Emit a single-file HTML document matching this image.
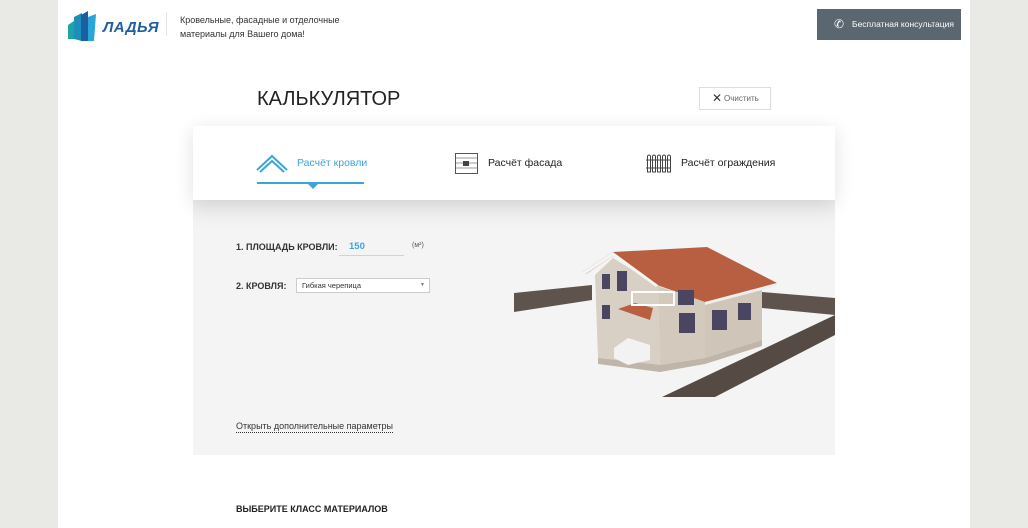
<!DOCTYPE html>
<html><head><meta charset="utf-8"><style>
*{margin:0;padding:0;box-sizing:border-box}
body{width:1028px;height:528px;background:#e9e9e5;font-family:"Liberation Sans",sans-serif;position:relative;overflow:hidden}
.main{position:absolute;left:58px;top:0;width:912px;height:528px;background:#fff}
.abs{position:absolute}
</style></head><body>
<div class="main"></div>
<svg class="abs" style="left:66px;top:9px" width="36" height="32" viewBox="0 0 36 32">
<path d="M2 16 L8 12 L8 30 L2 30Z" fill="#1aa5a6"/>
<path d="M8 8 L16 4 L16 32 L8 30Z" fill="#1b8fb8"/>
<path d="M15 6 L22 2 L22 32 L15 32Z" fill="#1d5ea3"/>
<path d="M22 8 L30 5 L28 32 L22 32Z" fill="#29a6d9"/>
</svg>
<div class="abs" style="left:103px;top:19px;font:italic bold 15px 'Liberation Sans',sans-serif;color:#1d5ea3;letter-spacing:0.5px">ЛАДЬЯ</div>
<div class="abs" style="left:166px;top:12px;width:1px;height:24px;background:#e5e5e5"></div>
<div class="abs" style="left:180px;top:13px;font-size:9px;line-height:14px;color:#333">Кровельные, фасадные и отделочные<br>материалы для Вашего дома!</div>
<div class="abs" style="left:817px;top:9px;width:144px;height:31px;background:#5a6770;color:#fff;font-size:8.5px;line-height:31px;padding-left:35px;white-space:nowrap">Бесплатная консультация</div>
<div class="abs" style="left:834px;top:17px;color:#fff;font-size:12px">✆</div>
<div class="abs" style="left:257px;top:88px;font-size:20px;color:#222">КАЛЬКУЛЯТОР</div>
<div class="abs" style="left:699px;top:87px;width:72px;height:23px;border:1px solid #ddd;font-size:8px;color:#666;line-height:21px;padding-left:24px">Очистить</div>
<div class="abs" style="left:712px;top:91px;font-size:12px;color:#333">✕</div>
<div class="abs" style="left:193px;top:200px;width:642px;height:255px;background:linear-gradient(#ececec,#f4f4f4 30px)"></div>
<div class="abs" style="left:193px;top:126px;width:642px;height:74px;background:#fff;box-shadow:0 4px 18px rgba(0,0,0,0.12)"></div>
<svg class="abs" style="left:256px;top:152px" width="32" height="22" viewBox="0 0 32 22"><path d="M1 18 L16 4 L31 18 M4 20 L16 9 L28 20" stroke="#3aa6d8" stroke-width="2" fill="none"/></svg>
<div class="abs" style="left:297px;top:157px;font-size:10.5px;color:#3aa6d8">Расчёт кровли</div>
<div class="abs" style="left:257px;top:182px;width:107px;height:2px;background:#3aa6d8"></div>
<div class="abs" style="left:308px;top:184px;width:0;height:0;border-left:5px solid transparent;border-right:5px solid transparent;border-top:5px solid #3aa6d8"></div>
<svg class="abs" style="left:455px;top:153px" width="23" height="21"><rect x="0.5" y="0.5" width="22" height="20" fill="none" stroke="#555"/><path d="M1 5h21M1 10h21M1 15h21" stroke="#999"/><rect x="8" y="8" width="6" height="5" fill="#444"/></svg>
<div class="abs" style="left:488px;top:157px;font-size:10.5px;color:#222">Расчёт фасада</div>
<svg class="abs" style="left:646px;top:153px" width="25" height="21"><g fill="none" stroke="#444"><path d="M1.5 3 Q3 1 4.5 3 V19 H1.5Z M6.5 3 Q8 1 9.5 3 V19 H6.5Z M11.5 3 Q13 1 14.5 3 V19 H11.5Z M16.5 3 Q18 1 19.5 3 V19 H16.5Z M21.5 3 Q23 1 24.5 3 V19 H21.5Z"/><path d="M0 7h25M0 15h25"/></g></svg>
<div class="abs" style="left:681px;top:157px;font-size:10.5px;color:#222">Расчёт ограждения</div>
<div class="abs" style="left:236px;top:242px;font-size:9px;font-weight:bold;color:#333">1. ПЛОЩАДЬ КРОВЛИ:</div>
<div class="abs" style="left:349px;top:241px;font-size:9.5px;font-weight:bold;color:#3aa6d8">150</div>
<div class="abs" style="left:339px;top:255px;width:65px;height:1px;background:#bfd8e6"></div>
<div class="abs" style="left:412px;top:242px;font-size:7px;color:#555">(м²)</div>
<div class="abs" style="left:236px;top:281px;font-size:9px;font-weight:bold;color:#333">2. КРОВЛЯ:</div>
<div class="abs" style="left:296px;top:278px;width:134px;height:15px;border:1px solid #ccc;background:#fff;font-size:7.5px;color:#333;line-height:13px;padding-left:5px">Гибкая черепица<span style="position:absolute;right:4px;font-size:5px;color:#777">▼</span></div>
<div class="abs" style="left:236px;top:421px;font-size:9px;color:#333;border-bottom:1px dotted #333;padding-bottom:1px">Открыть дополнительные параметры</div>
<svg class="abs" style="left:510px;top:240px" width="330" height="165" viewBox="0 0 330 165">
<path d="M4 53 L82 45 L82 60 L4 72Z" fill="#5e544d"/>
<path d="M252 52 L325 58 L325 75 L252 68Z" fill="#5e544d"/>
<path d="M152 157 L325 75 L325 95 L205 157Z" fill="#554a44"/>
<path d="M85 35 L103 18 L148 46 L150 125 L135 128 L88 118Z" fill="#d8d0c4"/>
<path d="M148 46 L195 62 L195 118 L150 125Z" fill="#d3cabd"/>
<path d="M195 62 L252 46 L252 100 L195 118Z" fill="#cfc6b9"/>
<path d="M88 118 L150 125 L195 118 L252 100 L252 106 L195 124 L150 132 L88 124Z" fill="#bfb5a8"/>
<path d="M72 32 L103 12 L197 7 L267 43 L195 62 L147 45 L103 16 L76 34Z" fill="#b85f42"/>
<path d="M72 32 L103 12 L148 45 L146 47 L103 16 L74 35Z" fill="#f4f4f4"/>
<path d="M195 62 L267 43 L267 46 L195 65Z" fill="#eee"/>
<path d="M108 69 L125 63 L143 68 L140 80 Z" fill="#b85f42"/>
<rect x="122" y="52" width="42" height="13" fill="none" stroke="#fff" stroke-width="2"/>
<rect x="92" y="34" width="8" height="15" fill="#4a4560"/><rect x="107" y="31" width="10" height="20" fill="#4a4560"/>
<rect x="92" y="65" width="8" height="14" fill="#4a4560"/>
<rect x="169" y="73" width="16" height="20" fill="#4a4560"/><rect x="168" y="50" width="16" height="15" fill="#4a4560"/>
<rect x="202" y="70" width="15" height="20" fill="#4a4560"/><rect x="228" y="63" width="13" height="17" fill="#4a4560"/>
<path d="M104 108 L118 98 L140 105 L140 120 L118 125 L104 118Z" fill="#f2f2f2"/>
</svg>
<div class="abs" style="left:236px;top:504px;font-size:9px;font-weight:bold;color:#222">ВЫБЕРИТЕ КЛАСС МАТЕРИАЛОВ</div>
</body></html>
